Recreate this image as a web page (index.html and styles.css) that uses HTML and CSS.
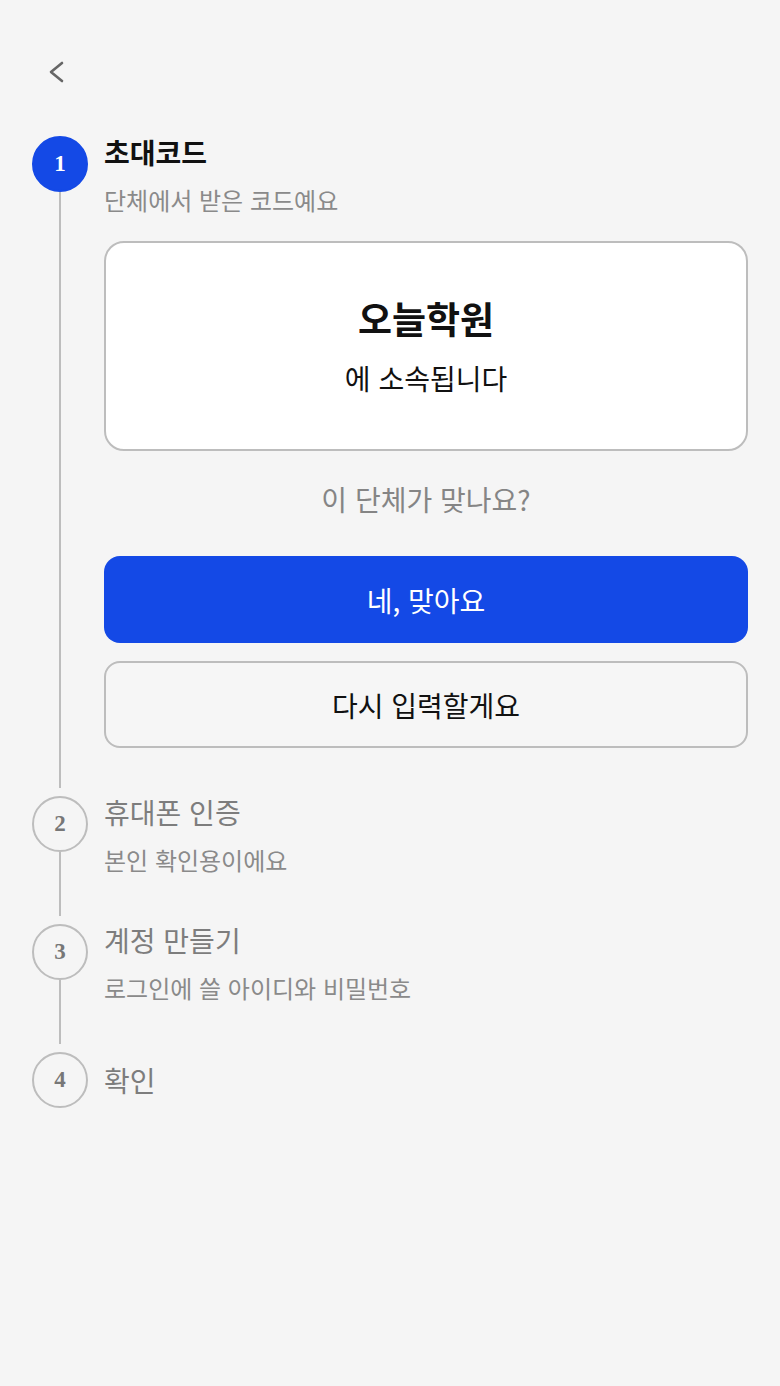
FILE: index.html
```html
<!DOCTYPE html>
<html lang="ko">
<head>
  <meta charset="UTF-8">
  <meta name="viewport" content="width=device-width, initial-scale=1.0">
  <title>가입하기</title>
  <link rel="stylesheet" href="styles.css">
</head>
<body>
  <div class="topbar">
    <button class="back" aria-label="뒤로">
      <svg width="24" height="24" viewBox="0 0 24 24"><path d="M18 3 L7 12 L18 21" fill="none" stroke="#666" stroke-width="2.6" stroke-linecap="round" stroke-linejoin="round"/></svg>
    </button>
  </div>

  <div class="steps">
    <div class="step">
      <div class="rail">
        <div class="num active">1</div>
        <div class="line"></div>
      </div>
      <div class="body">
        <div class="title current">초대코드</div>
        <div class="sub">단체에서 받은 코드예요</div>

        <div class="org-card">
          <div class="org-name">오늘학원</div>
          <div class="org-text">에 소속됩니다</div>
        </div>

        <p class="question">이 단체가 맞나요?</p>
        <button class="btn primary">네, 맞아요</button>
        <button class="btn outline">다시 입력할게요</button>
      </div>
    </div>

    <div class="step">
      <div class="rail">
        <div class="num">2</div>
        <div class="line"></div>
      </div>
      <div class="body">
        <div class="title">휴대폰 인증</div>
        <div class="sub">본인 확인용이에요</div>
      </div>
    </div>

    <div class="step">
      <div class="rail">
        <div class="num">3</div>
        <div class="line"></div>
      </div>
      <div class="body">
        <div class="title">계정 만들기</div>
        <div class="sub">로그인에 쓸 아이디와 비밀번호</div>
      </div>
    </div>

    <div class="step last">
      <div class="rail">
        <div class="num">4</div>
      </div>
      <div class="body">
        <div class="title">확인</div>
      </div>
    </div>
  </div>
</body>
</html>
```

FILE: styles.css
```css
body {
  margin: 0;
  padding: 0;
  background: #f5f5f5;
  font-family: "Noto Sans CJK KR", "Noto Sans", sans-serif;
  color: #111;
}
.topbar {
  height: 136px;
  padding: 60px 0 0 44px;
  box-sizing: border-box;
}
.back {
  display: block;
  width: 24px;
  height: 24px;
  padding: 0;
  border: none;
  background: none;
  cursor: pointer;
}
.steps {
  padding: 0 32px;
}
.step {
  display: flex;
  gap: 16px;
  margin-bottom: 8px;
}
.rail {
  display: flex;
  flex-direction: column;
  align-items: center;
  width: 56px;
  flex-shrink: 0;
}
.num {
  width: 56px;
  height: 56px;
  box-sizing: border-box;
  border-radius: 50%;
  border: 2px solid #bdbdbd;
  display: flex;
  align-items: center;
  justify-content: center;
  font-family: "Liberation Serif", serif;
  font-weight: bold;
  font-size: 23px;
  color: #777;
}
.num.active {
  background: #1449e6;
  border-color: #1449e6;
  color: #fff;
}
.line {
  flex: 1;
  width: 2px;
  background: #bdbdbd;
}
.body {
  flex: 1;
  padding-bottom: 40px;
}
.title {
  font-size: 28px;
  line-height: 32px;
  color: #7d7d7d;
}
.title.current {
  color: #111;
  font-weight: bold;
}
.sub {
  margin-top: 16px;
  font-size: 24px;
  line-height: 32px;
  color: #8a8a8a;
}
.step.last .body {
  padding: 12px 0 0;
}
.org-card {
  margin-top: 25px;
  background: #fff;
  border: 2px solid #bdbdbd;
  border-radius: 20px;
  padding: 53px 20px;
  text-align: center;
}
.org-name {
  font-size: 37px;
  line-height: 44px;
  font-weight: bold;
}
.org-text {
  margin-top: 20px;
  font-size: 28px;
  line-height: 36px;
}
.question {
  margin: 30px 0 0;
  text-align: center;
  font-size: 28px;
  line-height: 36px;
  color: #858585;
}
.btn {
  display: block;
  width: 100%;
  height: 87px;
  border-radius: 16px;
  font-family: inherit;
  font-size: 28px;
  cursor: pointer;
}
.btn.primary {
  margin-top: 39px;
  background: #1449e6;
  border: none;
  color: #fff;
}
.btn.outline {
  margin-top: 18px;
  background: #f6f6f6;
  border: 2px solid #bdbdbd;
  color: #111;
}
```
